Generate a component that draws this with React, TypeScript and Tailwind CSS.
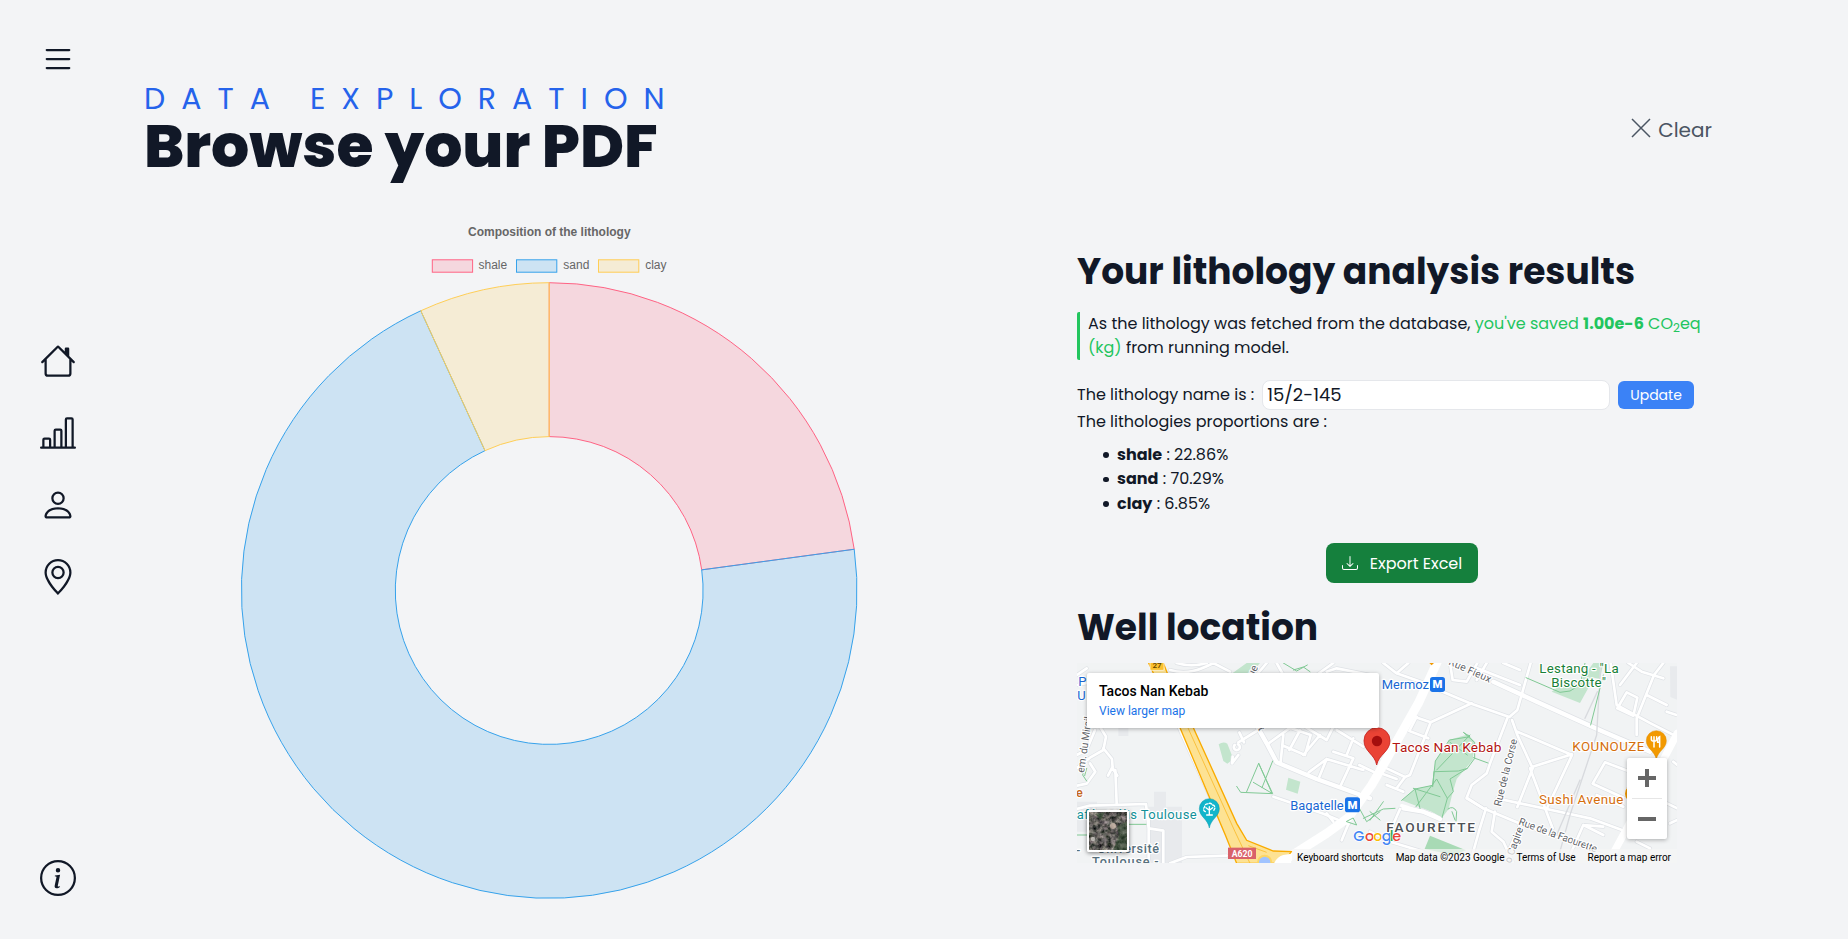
import React from "react";
import {
  BsHouse,
  BsBarChartLine,
  BsPerson,
  BsGeoAlt,
  BsInfoCircle,
  BsList,
  BsDownload,
} from "react-icons/bs";

const slices = [
  { name: "shale", value: 22.86, fill: "rgba(255,99,132,0.2)", stroke: "rgb(255,99,132)", box: 432.3, label: 478.5 },
  { name: "sand", value: 70.29, fill: "rgba(54,162,235,0.2)", stroke: "rgb(54,162,235)", box: 516.5, label: 563.3 },
  { name: "clay", value: 6.85, fill: "rgba(255,206,86,0.2)", stroke: "rgb(255,206,86)", box: 598.5, label: 645.2 },
];

const CX = 549.2;
const CY = 590.5;
const OUTER = 307.8;
const INNER = 153.9;

function arc(from: number, to: number) {
  const p = (r: number, t: number) =>
    `${(CX + r * Math.sin(t)).toFixed(2)},${(CY - r * Math.cos(t)).toFixed(2)}`;
  const a = (from / 100) * Math.PI * 2;
  const b = (to / 100) * Math.PI * 2;
  const large = to - from > 50 ? 1 : 0;
  return `M${p(OUTER, a)} A${OUTER},${OUTER} 0 ${large} 1 ${p(OUTER, b)} L${p(INNER, b)} A${INNER},${INNER} 0 ${large} 0 ${p(INNER, a)} Z`;
}

function LithologyChart() {
  let start = 0;
  return (
    <svg className="mt-[34px] h-[690px] w-[810px] shrink-0" viewBox="144 210 810 690">
      <g fontFamily="Liberation Sans, Arial, sans-serif" fontSize="12" fill="#666">
        <text x="549.3" y="236" textAnchor="middle" fontWeight="700">
          Composition of the lithology
        </text>
        {slices.map((s) => (
          <g key={s.name}>
            <rect x={s.box} y="259.8" width="40.3" height="12.4" fill={s.fill} stroke={s.stroke} />
            <text x={s.label} y="269">
              {s.name}
            </text>
          </g>
        ))}
      </g>
      {slices.map((s) => {
        const d = arc(start, start + s.value);
        start += s.value;
        return <path key={s.name} d={d} fill={s.fill} stroke={s.stroke} strokeWidth="1" />;
      })}
    </svg>
  );
}

const streets = [
  "M90 215 L108 245 L100 285 L60 308 L20 340",
  "M100 280 L126 312 L128 340 L142 362 M128 335 L114 362",
  "M136 345 L140 445",
  "M20 392 L50 386 L76 350 L60 325 M20 300 L50 285 L75 225",
  "M20 462 L60 452 L228 447 L236 520 L280 527 L280 625 M236 490 L236 625",
  "M300 625 L350 606 L470 602",
  "M505 262 L560 228 M508 232 L522 262",
  "M596 265 L665 215 M640 240 L632 320 M640 272 L705 300 L722 240 L660 218 M690 226 L658 285 M705 215 L770 255 L790 215 M750 240 L700 300",
  "M716 352 L770 312 L880 345 M748 365 L770 312 M812 392 L850 310 L790 290 M800 225 L880 275 M850 250 L830 300 M868 330 L930 360",
  "M610 425 L760 476 L836 508 M836 505 L815 556 M770 475 L790 500",
  "M300 45 C350 60 390 45 430 24 M320 24 C360 36 390 30 410 24 M430 24 L480 50 M560 60 L590 24 M620 24 L640 60 M740 60 L790 24 M770 50 L800 40 L900 60",
  "M21 60 L50 40 M21 90 L70 80",
  "M488 305 L486 325 L505 300 M494 270 a9 9 0 1 0 10 -2",
  "M940 24 L980 55 L1015 24 M980 55 L1080 90",
  "M1075 92 L1200 145 L1318 186 L1342 165 L1382 24",
  "M1035 186 L1082 202 L1205 145 M1040 185 L1018 228 L1075 250 M1082 202 L1020 360 L1005 366 M1300 24 L1350 45",
  "M1140 24 L1148 75 L1190 80 L1222 24 M1222 40 L1350 90 M1250 24 L1220 75",
  "M950 340 L1005 366 L980 400 M950 390 L1000 410 M920 350 L980 372",
  "M1312 190 L1262 320 L1250 355 L1205 390 L1190 428 L1240 460",
  "M1326 195 L1342 240 L1388 340 L1342 456 M1342 230 L1506 300 L1430 462 M1388 335 L1506 298 M1380 340 L1448 520",
  "M1190 430 L1240 460 L1360 510 L1500 560 L1600 600 M1280 430 L1430 462 L1560 490 L1670 530",
  "M1248 460 L1228 525 L1200 625 M1275 470 L1265 530 L1300 560 L1330 625 M1350 510 L1310 600",
  "M1500 600 L1540 510 L1600 515 M1540 510 L1600 540",
  "M1605 322 L1568 386 L1660 428 M1605 322 L1680 350 M1580 420 L1660 455",
  "M1622 24 L1640 150 L1742 205 L1820 245",
  "M1752 60 L1700 190 L1700 240 M1670 112 L1642 160 L1690 182 L1702 128 Z M1675 24 L1715 50 L1780 70 M1752 60 L1780 24 M1650 90 L1700 24 M1730 120 L1790 150 M1790 170 L1820 180",
  "M1800 505 L1822 495 M1810 320 L1822 330 M1780 440 L1822 460 M1700 560 L1740 580",
  "M900 530 L960 560 L1060 590 M990 462 L960 530",
];

const avenues = [
  "M545 185 L590 265 L620 322 L740 372 L900 430",
  "M1270 80 L1400 140 L1600 230 L1740 290",
  "M1000 460 L1060 470 L1110 492",
];

function MetroBadge({ x, y }: { x: number; y: number }) {
  return (
    <g>
      <rect x={x} y={y} width="45" height="45" rx="8" fill="#1a73e8" />
      <text x={x + 22.5} y={y + 34} textAnchor="middle" fontSize="34" fontWeight="900" fill="#fff" stroke="none">
        M
      </text>
    </g>
  );
}

function MapDrawing() {
  return (
    <svg className="block h-[200px] w-[600px]" viewBox="21 24 1800 600" fontFamily="Roboto, sans-serif">
      <rect x="21" y="24" width="1800" height="600" fill="#f1f3f4" />
      <g fill="#e8eaed">
        <path d="M145 205h30v38h-30z M252 410h36v46h-36z M21 440h60v90h-60z M236 455h100v170h-100z M1800 34h21v100l-20-8z" />
      </g>
      <g fill="#c3e5cd">
        <path d="M446 268 Q460 258 472 266 L490 312 L472 326 L460 318 Z M655 368 L691 380 L683 416 L648 404 Z M488 54 L530 24 L570 24 L545 54 Z" />
        <path d="M1445 110 L1470 90 L1530 80 L1570 24 L1600 24 L1590 72 L1572 68 L1530 144 Z" />
        <path d="M995 436 L1035 402 L1088 391 L1096 318 L1138 255 L1195 238 L1214 262 L1208 315 L1160 372 L1146 420 L1136 462 L1116 488 L1085 470 Z" />
      </g>
      <path d="M1080 542 L1188 586 L1150 600 L1064 582 Z" fill="#a8dab5" />
      <g fill="none" strokeLinejoin="round" strokeLinecap="round">
        <g stroke="#dfe2e6" strokeWidth="12">
          {streets.map((d) => (
            <path key={d} d={d} />
          ))}
        </g>
        <g stroke="#dfe2e6" strokeWidth="17">
          {avenues.map((d) => (
            <path key={d} d={d} />
          ))}
        </g>
        <g stroke="#fff" strokeWidth="8">
          {streets.map((d) => (
            <path key={d} d={d} />
          ))}
        </g>
        <g stroke="#fff" strokeWidth="13">
          {avenues.map((d) => (
            <path key={d} d={d} />
          ))}
        </g>
        <path d="M620 630 L770 535 L835 488 L905 390 L940 330 L1045 145 L1102 20" stroke="#fff" strokeWidth="27" />
        <path d="M1600 650 L1665 530 L1822 235" stroke="#fff" strokeWidth="22" />
        <path d="M1592 24 L1580 240 L1500 480 L1460 625 M1582 110 L1545 190 M1530 375 L1460 540" stroke="#d8dade" strokeWidth="4" />
        <g stroke="#81c995" strokeWidth="3">
          <path d="M500 394 L512 412 L608 416 L566 325 L530 410 M566 325 L606 415 L550 382 M608 318 L576 398" />
          <path d="M640 24 L680 48 L712 30 M670 45 L700 36 L720 50 M21 540 L75 540 M150 508 L228 508 M45 330 L38 360 L50 378 M50 340 L44 362" />
          <path d="M868 460 L890 500 L930 470 M880 490 L940 462 L975 460 M900 496 L940 440 M830 500 L860 510 L850 490 Z M900 470 L930 495" />
          <path d="M1368 68 L1470 112 L1500 108 L1530 90 L1545 24 M1600 60 L1562 210" />
          <path d="M995 436 L1035 402 L1088 391 L1096 318 L1138 255 L1200 245 L1180 232 L1214 262 L1214 310 L1192 340 L1140 372 L1150 410 L1132 430 L1116 488" />
          <path d="M1210 308 L1254 324 M1094 350 L1165 348 L1192 340 M1192 300 L1140 262 M1100 345 L1200 240 M1035 402 L1050 460 M1038 455 L1100 372 L1132 430 M1030 400 L1110 425 M1092 350 L1088 395" />
          <path d="M1134 462 Q1150 450 1160 470 L1158 498 M1146 470 L1155 495" />
        </g>
        <path d="M995 452 L1090 480 L1112 492" stroke="#fff" strokeWidth="10" />
        <path d="M322 205 L500 600" stroke="#dfe2e6" strokeWidth="14" />
        <path d="M322 205 L500 600" stroke="#fff" strokeWidth="10" />
      </g>
      <path
        d="M236 24 L280 24 L300 75 L370 218 L500 505 L530 556 L610 588 L664 590 L640 625 L500 625 L466 540 L330 218 L262 80 Z"
        fill="#fde293"
        stroke="#f9ab00"
        strokeWidth="4"
      />
      <path d="M350 210 L495 530 L540 625 M535 572 L590 592" fill="none" stroke="#f9bb2d" strokeWidth="2.5" />
      <path d="M612 625 Q622 604 640 600 L664 596 L664 625Z" fill="#fff" />
      <circle cx="584" cy="622" r="20" fill="#a0c3ff" stroke="#fdd663" strokeWidth="6" />
      <rect x="240" y="10" width="42" height="36" rx="3" fill="#fbc02d" stroke="#fff" strokeWidth="2" />
      <text x="261" y="38" textAnchor="middle" fontSize="24" fontWeight="500" fill="#5f4300">
        27
      </text>
      <rect x="474" y="578" width="84" height="34" fill="#d9626a" />
      <text x="516" y="606" textAnchor="middle" fontSize="26" fontWeight="700" fill="#fff">
        A620
      </text>
      <g stroke="#fff" strokeWidth="7" strokeLinejoin="round" style={{ paintOrder: "stroke" }}>
        <g fontSize="39" fill="#1967d2">
          <text x="25" y="93">P</text>
          <text x="22" y="135">U</text>
          <text x="661" y="464" textLength="160">Bagatelle</text>
          <text x="935" y="101" textLength="142">Mermoz</text>
        </g>
        <text x="18" y="427" fontSize="38" fontWeight="500" fill="#c5651b">e</text>
        <g fontSize="39" fill="#129199">
          <text x="20" y="491" textLength="360">afé - Vélis Toulouse</text>
        </g>
        <g fontSize="38" fontWeight="500" fill="#57707d">
          <text x="82" y="594" textLength="185">Université</text>
          <text x="66" y="634" textLength="200">Toulouse -</text>
          <text x="18" y="600">-</text>
        </g>
        <g fontSize="40" fill="#188038">
          <text x="1408" y="54" textLength="238">Lestang - "La</text>
          <text x="1444" y="96" textLength="164">Biscotte"</text>
        </g>
        <g fontSize="40" fill="#d56e0c">
          <text x="1507" y="289" textLength="216">KOUNOUZE</text>
          <text x="1407" y="448" textLength="253">Sushi Avenue</text>
        </g>
        <text x="967" y="291" fontSize="41" fill="#b31412" textLength="327">
          Tacos Nan Kebab
        </text>
        <text x="949" y="531" fontSize="41" fontWeight="500" fill="#4d5156" textLength="266">
          FAOURETTE
        </text>
        <g fontSize="31" fill="#5f6368">
          <text transform="translate(42 354) rotate(-82)" textLength="170">em. du Mirail</text>
          <text transform="translate(1134 28) rotate(24)" textLength="136">Rue Fieux</text>
          <text transform="translate(1292 455) rotate(-76)" textLength="206">Rue de la Corse</text>
          <text transform="translate(1344 508) rotate(20)" textLength="248">Rue de la Faourette</text>
          <text transform="translate(1322 626) rotate(-70)" textLength="112">o Cagire</text>
          <text transform="translate(540 84) rotate(-62)">Rue</text>
          <text transform="translate(556 205) rotate(64)">nt</text>
        </g>
      </g>
      <MetroBadge x={825} y={427} />
      <MetroBadge x={1080} y={66} />
      <path d="M1078 24 l14 0 l-7 7z" fill="#f29900" />
      <path d="M418 519 C414 492 388 485 388 461 A30 30 0 0 1 448 461 C448 485 422 492 418 519Z" fill="#12b5cb" stroke="#0d98ab" strokeWidth="1.5" />
      <g fill="none" stroke="#fff" strokeWidth="4" strokeLinecap="round">
        <path d="M418 480 V455 M410 480 H427 M418 466 L408 458 M418 466 L428 458" />
        <path d="M406 470 a8 8 0 0 1 -2 -14 a8 8 0 0 1 10 -9 a8 8 0 0 1 13 3 a8 8 0 0 1 6 13 l-3 7" strokeDasharray="7 5" />
      </g>
      <path d="M1759 313 C1754 287 1729 281 1729 257 A30 30 0 0 1 1789 257 C1789 281 1764 287 1759 313Z" fill="#f29900" stroke="#e08c00" strokeWidth="1.5" />
      <g fill="none" stroke="#fff" strokeWidth="4.5" strokeLinecap="round">
        <path d="M1752 258 V276 M1744 245 V253 Q1744 259 1752 259 Q1760 259 1760 253 V245 M1752 245 V256 M1769 276 V245 Q1763 248 1763 262 H1769" />
      </g>
      <circle cx="1692" cy="416" r="27" fill="#f29900" />
      <path d="M920 330 C915 298 882 290 882 257 A38.5 38.5 0 0 1 960 257 C960 290 926 298 920 330Z" fill="#ea4335" stroke="#c5221f" strokeWidth="2.5" />
      <circle cx="921" cy="258" r="15.5" fill="#a50e0e" />
      <g fontFamily="Poppins, sans-serif" fontSize="43" fontWeight="500" stroke="#fff" strokeWidth="4" strokeLinejoin="round" style={{ paintOrder: "stroke" }}>
        <text y="559">
          <tspan x="850" fill="#4285f4">G</tspan>
          <tspan x="885" fill="#ea4335">o</tspan>
          <tspan x="910" fill="#fbbc04">o</tspan>
          <tspan x="935" fill="#4285f4">g</tspan>
          <tspan x="959" fill="#34a853">l</tspan>
          <tspan x="967" fill="#ea4335">e</tspan>
        </text>
      </g>
    </svg>
  );
}

function AerialThumb() {
  return (
    <svg className="h-full w-full" viewBox="0 0 38 38">
      <defs>
        <filter id="ground" x="0" y="0" width="100%" height="100%" colorInterpolationFilters="sRGB">
          <feTurbulence type="fractalNoise" baseFrequency="0.22" numOctaves="4" seed="8" />
          <feColorMatrix values="0.9 0 0 0 -0.07  0.8 0.08 0 0 -0.07  0.8 0 0.05 0 -0.07  0 0 0 0 1" />
        </filter>
      </defs>
      <rect width="38" height="38" fill="#555a50" filter="url(#ground)" />
      <path d="M28 14 L38 10 V38 H24 L30 24Z M6 2 L16 0 L12 8Z" fill="#2c4a2c" opacity="0.5" />
      <circle cx="24" cy="14" r="3" fill="#d8c3b4" opacity="0.7" />
      <circle cx="4" cy="27" r="2.2" fill="#d9d6d0" opacity="0.7" />
    </svg>
  );
}

function WellMap() {
  return (
    <div className="relative mt-[15px] h-[200px] w-[600px] overflow-hidden font-['Roboto',sans-serif]">
      <MapDrawing />
      <div className="absolute left-[10px] top-[10px] h-[55px] w-[292px] rounded-[2px] bg-white pl-3 pt-[9px] shadow-[0_1px_4px_rgba(0,0,0,0.3)]">
        <div className="text-[14px] font-medium leading-[18px] text-black">Tacos Nan Kebab</div>
        <div className="mt-[3px] text-[12px] leading-4 text-[#1a73e8]">View larger map</div>
      </div>
      <div className="absolute left-[10px] top-[147px] h-[42px] w-[42px] overflow-hidden rounded-[2px] border-2 border-white shadow-[0_1px_4px_rgba(0,0,0,0.5)]">
        <AerialThumb />
      </div>
      <div className="absolute left-[550px] top-[95px] flex h-[81px] w-10 flex-col items-center rounded-[2px] bg-white shadow-[0_1px_4px_rgba(0,0,0,0.3)]">
        <svg className="h-10 w-10" viewBox="0 0 40 40">
          <path d="M18 11h4v7h7v4h-7v7h-4v-7h-7v-4h7z" fill="#666" />
        </svg>
        <div className="h-px w-[30px] bg-[#e6e6e6]" />
        <svg className="h-10 w-10" viewBox="0 0 40 40">
          <path d="M11 18h18v4H11z" fill="#666" />
        </svg>
      </div>
      <div className="absolute bottom-0 right-0 flex h-[14px] w-[385px] items-center justify-between whitespace-nowrap bg-[#f5f5f5]/70 pl-[5px] pr-[6px] pt-[4px] text-[10px] leading-[14px] text-black">
        <span>Keyboard shortcuts</span>
        <span>Map data ©2023 Google</span>
        <span>Terms of Use</span>
        <span>Report a map error</span>
      </div>
    </div>
  );
}

function Sidebar() {
  return (
    <aside className="flex h-full w-[116px] shrink-0 flex-col items-center justify-between pb-[43px] pt-[41px] text-[36px]">
      <BsList />
      <nav className="mt-[1px] flex flex-col gap-9">
        <BsHouse />
        <BsBarChartLine />
        <BsPerson />
        <BsGeoAlt />
      </nav>
      <BsInfoCircle />
    </aside>
  );
}

export default function App() {
  return (
    <div className="flex h-[939px] w-full overflow-hidden bg-[#f3f4f6] font-['Poppins',sans-serif] text-base text-[#111827]">
      <Sidebar />
      <main className="flex-1 pl-7 pt-[81px]">
        <header className="flex w-[1568px] items-center justify-between">
          <div>
            <p className="text-3xl leading-9 tracking-[16px] text-[#2563eb]">DATA EXPLORATION</p>
            <h1 className="-mt-px text-6xl font-extrabold leading-none">Browse your PDF</h1>
          </div>
          <button className="mt-[3px] flex items-center text-xl text-[#4b5563]">
            <svg className="-mt-1 mr-[7px] h-5 w-5" viewBox="0 0 20 20" fill="none" stroke="currentColor" strokeWidth="1.5">
              <path d="M1 1 L19 19 M19 1 L1 19" />
            </svg>
            Clear
          </button>
        </header>
        <div className="flex">
          <LithologyChart />
          <section className="ml-[123px] mt-[76px] w-[650px]">
            <h2 className="text-4xl font-bold">Your lithology analysis results</h2>
            <p className="mt-5 rounded-[2px] border-l-[3px] border-[#22c55e] pl-2 leading-6">
              As the lithology was fetched from the database,{" "}
              <span className="text-[#22c55e]">
                you've saved <b>1.00e-6</b> CO<sub>2</sub>eq (kg)
              </span>{" "}
              from running model.
            </p>
            <div className="mt-5 flex h-[30px] items-center">
              <label>The lithology name is :</label>
              <input
                className="ml-2 h-[30px] w-[348px] rounded-lg border border-[#e5e7eb] bg-white px-1 pb-[2px] text-lg"
                defaultValue="15/2-145"
              />
              <button className="ml-2 h-7 rounded-md bg-[#3b82f6] px-3 text-sm text-white">Update</button>
            </div>
            <p>The lithologies proportions are :</p>
            <ul className="mt-[8.6px] pl-[26px] leading-[24.5px]">
              {slices.map((s) => (
                <li
                  key={s.name}
                  className="flex items-center gap-[8.5px] before:h-[5.5px] before:w-[5.5px] before:rounded-full before:bg-[#111827] before:content-['']"
                >
                  <span>
                    <b>{s.name}</b> : {s.value}%
                  </span>
                </li>
              ))}
            </ul>
            <button className="mx-auto mt-[27px] flex h-10 items-center rounded-lg bg-[#15803d] px-4 pt-[2px] text-white">
              <BsDownload className="-mt-[2px] mr-3" />
              Export Excel
            </button>
            <h2 className="mt-[25px] text-4xl font-bold">Well location</h2>
            <WellMap />
          </section>
        </div>
      </main>
    </div>
  );
}
